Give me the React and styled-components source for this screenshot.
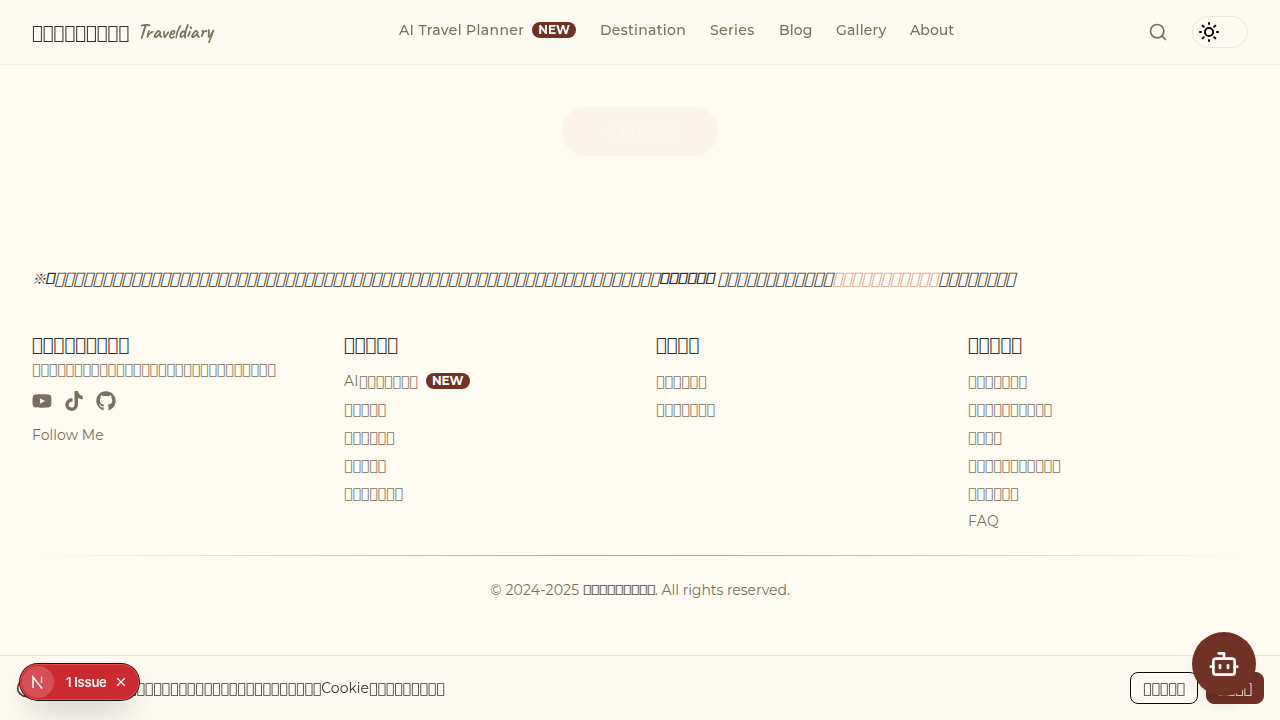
import React from "react";
import styled, { createGlobalStyle } from "styled-components";
import { Search, Bot, Cookie, X } from "lucide-react";
import { FaYoutube, FaTiktok, FaGithub } from "react-icons/fa6";

const Global = createGlobalStyle`
  * { box-sizing: border-box; }
  html { background: #fefbf2; }
  body { margin: 0; overflow: hidden; font: 14px/20px Montserrat, Inter, "Liberation Sans", sans-serif; color: #79705c; }
  ul { list-style: none; margin: 0; padding: 0; }
  h3, p { margin: 0; }
`;

const Page = styled.div`
  height: 720px;
  overflow: hidden;
  position: relative;
`;

const Header = styled.header`
  height: 65px;
  padding: 0 32px;
  display: flex;
  justify-content: space-between;
  background: #fdfaf2;
  border-bottom: 1px solid #f5f1e7;
  will-change: transform;
`;

const Brand = styled.div`
  width: 367px;
  display: flex;
  align-items: center;
  gap: 8px;
  color: #333;
`;

const BrandName = styled.span`
  padding-top: 3px;
`;

const Script = styled.span`
  font: 700 20px/28px Caveat, Lato, cursive;
  color: #79705c;
`;

const Nav = styled.nav`
  flex: 1;
  display: flex;
  gap: 24px;
  padding-top: 20px;
  font-weight: 500;
`;

const NavItem = styled.span`
  display: flex;
  gap: 8px;
  align-items: center;
  height: 20px;
  width: ${(p) => p.$w}px;
  white-space: nowrap;
  letter-spacing: ${(p) => p.$ls}px;
`;

const Badge = styled.span`
  width: 44px;
  height: 16px;
  border-radius: 8px;
  background: #703224;
  color: #fff;
  font-weight: 700;
  font-size: 12px;
  line-height: 16px;
  letter-spacing: 0;
  text-align: center;
`;

const Tools = styled.div`
  display: flex;
  align-items: center;
  gap: 24px;
`;

const Toggle = styled.div`
  width: 56px;
  height: 32px;
  border: 1px solid #efe8d9;
  border-radius: 16px;
  padding: 3px 4px;
  color: #0a0a0a;
`;

const Tofu = styled.span`
  font-family: ${(p) => (p.$short ? "Montserrat" : '"DejaVu Sans"')}, sans-serif;
  font-size: ${(p) => p.$size || 14}px;
  font-weight: ${(p) => p.$weight || 400};
  letter-spacing: ${(p) => (p.$short ? "-0.016em" : "0")};
  line-height: 1;
  white-space: nowrap;
`;

const SlantedTofu = styled(Tofu)`
  display: inline-block;
  font-style: normal;
  transform: skewX(-14deg);
  transform-origin: 0 72%;
`;

// Placeholder boxes, drawn by the font's own missing-glyph shape.
const Boxes = ({ n, slanted, ...rest }) => {
  const Kind = slanted ? SlantedTofu : Tofu;
  return <Kind {...rest}>{"\u{10FFFD}".repeat(n)}</Kind>;
};

const More = styled.div`
  height: 171px;
  padding-top: 42px;
  display: flex;
  justify-content: center;
`;

const MoreButton = styled.div`
  width: 156px;
  height: 49px;
  border-radius: 25px;
  background: #fcf4ea;
  color: #faf9ea;
  -webkit-text-stroke: 0.4px #faf9ea;
  display: flex;
  align-items: center;
  justify-content: center;
`;

const Footer = styled.footer`
  padding: 31px 32px 0;
  height: 484px;
`;

const Notice = styled.p`
  font-size: 16px;
  line-height: 24px;
  font-style: italic;
  white-space: nowrap;
  word-spacing: -1px;
  color: #333;
  height: 24px;
`;

const NoteMark = styled.span`
  font-family: "Noto Sans CJK JP", sans-serif;
  font-size: 14px;
  line-height: 1;
  font-weight: 500;
`;

const NoticeLink = styled.span`
  color: #df9f8e;

  ${SlantedTofu} {
    text-decoration: underline;
  }
`;

const Columns = styled.div`
  display: grid;
  grid-template-columns: repeat(4, 280px);
  gap: 32px;
  margin-top: 40px;
  height: 224px;
`;

const Title = styled.h3`
  height: 28px;
  line-height: 28px;
  color: #333;
  font-weight: 400;
`;

const About = styled.p`
  height: 20px;
  line-height: 20px;
`;

const Socials = styled.div`
  display: flex;
  gap: 12px;
  margin-top: 12px;
  height: 20px;
`;

const Follow = styled.p`
  margin-top: 14px;
  letter-spacing: 0.05px;
`;

const Links = styled.ul`
  margin-top: 12px;
  display: grid;
  gap: 8px;
`;

const LinkRow = styled.li`
  height: 20px;
  display: flex;
  align-items: center;
  white-space: nowrap;
`;

const Latin = styled.span`
  letter-spacing: 0.3px;
`;

const LinkBadge = styled(Badge)`
  margin-left: 8px;
`;

const Rule = styled.div`
  height: 1px;
  background: linear-gradient(90deg, transparent, #a6a29a, transparent);
`;

const Copyright = styled.p`
  margin-top: 24px;
  text-align: center;
`;

const Years = styled.span`
  letter-spacing: 0.15px;
`;

const Rights = styled.span`
  letter-spacing: -0.04px;
`;

const CookieBar = styled.div`
  position: absolute;
  inset: 655px 0 0 0;
  border-top: 1px solid #ece7da;
  background: #fdfaf2;
  padding: 0 16px;
  display: flex;
  align-items: center;
  gap: 8px;
  color: #333;
  will-change: transform;
`;

const Message = styled.p`
  flex: 1;
  white-space: nowrap;
`;

const CookieButton = styled.div`
  width: ${(p) => (p.$solid ? 58 : 68)}px;
  height: 32px;
  border-radius: 8px;
  border: 1px solid ${(p) => (p.$solid ? "#703224" : "#0a0a0a")};
  background: ${(p) => (p.$solid ? "#703224" : "transparent")};
  color: ${(p) => (p.$solid ? "#fff" : "#333")};
  display: flex;
  align-items: center;
  justify-content: center;
`;

const BotButton = styled.div`
  position: absolute;
  left: 1192px;
  top: 632px;
  width: 64px;
  height: 64px;
  border-radius: 50%;
  background: #703224;
  color: #fff;
  display: flex;
  align-items: center;
  justify-content: center;
  box-shadow: 0 10px 15px -3px rgba(0, 0, 0, 0.1), 0 4px 6px -4px rgba(0, 0, 0, 0.1);
  will-change: transform;
`;

const Issue = styled.div`
  position: absolute;
  left: 20px;
  top: 664px;
  width: 119px;
  height: 36px;
  border-radius: 18px;
  background: #ca2a30;
  box-shadow: 0 0 0 1px #171717, inset 0 0 0 1px #e5484d, 0 16px 32px -8px rgba(0, 0, 0, 0.24);
  color: #fff;
  display: flex;
  align-items: center;
  padding-left: 2px;
  font: 600 13px/16px Inter, sans-serif;
  will-change: transform;
`;

const Mark = styled.div`
  width: 32px;
  height: 32px;
  border-radius: 50%;
  background: #d55055;
  display: flex;
  align-items: center;
  justify-content: center;
  margin-right: 12px;
`;

const IssueText = styled.span`
  width: 48px;
  white-space: nowrap;
  letter-spacing: -0.25px;
`;

const SunIcon = () => (
  <svg width="24" height="24" viewBox="0 0 24 24" fill="none" stroke="currentColor" strokeWidth="2">
    <circle cx="12" cy="12" r="4.1" />
    <path d="M12 2.2v2.6M12 19.2v2.6M2.2 12h2.6M19.2 12h2.6" />
    <path strokeLinecap="round" d="M5.6 5.6l1.2 1.2M17.2 17.2l1.2 1.2M5.6 18.4l1.2-1.2M17.2 6.8l1.2-1.2" />
  </svg>
);

const columns = [
  { title: 5, links: [7, 5, 6, 5, 7], ai: true },
  { title: 4, links: [6, 7] },
  { title: 5, links: [7, 10, 4, 11, 6], faq: true },
];

export default function App() {
  return (
    <Page>
      <Global />
      <Header>
        <Brand>
          <BrandName><Boxes n={9} $size={18} /></BrandName>
          <Script>Traveldiary</Script>
        </Brand>
        <Nav>
          <NavItem $w={177} $ls={0.35}>AI Travel Planner <Badge>NEW</Badge></NavItem>
          <NavItem $w={86} $ls={0.28}>Destination</NavItem>
          <NavItem $w={45} $ls={0.35}>Series</NavItem>
          <NavItem $w={33} $ls={0.1}>Blog</NavItem>
          <NavItem $w={50} $ls={0.2}>Gallery</NavItem>
          <NavItem $w={44} $ls={0.05}>About</NavItem>
        </Nav>
        <Tools>
          <Search size={20} color="#79705c" />
          <Toggle><SunIcon /></Toggle>
        </Tools>
      </Header>
      <More>
        <MoreButton><Boxes n={8} $size={15.2} /></MoreButton>
      </More>
      <Footer>
        <Notice>
          <NoteMark>※</NoteMark><Boxes n={1} $size={16} $short $weight={600} /><Boxes n={63} $size={16} slanted />
          <Boxes n={6} $size={16} $short $weight={600} /> <Boxes n={12} $size={16} slanted />
          <NoticeLink><Boxes n={11} $size={16} slanted /></NoticeLink>
          <Boxes n={8} $size={16} slanted />
        </Notice>
        <Columns>
          <section>
            <Title><Boxes n={9} $size={18} /></Title>
            <About><Boxes n={29} /></About>
            <Socials>
              <FaYoutube size={20} />
              <FaTiktok size={20} />
              <FaGithub size={20} />
            </Socials>
            <Follow>Follow Me</Follow>
          </section>
          {columns.map((c, i) => (
            <section key={i}>
              <Title><Boxes n={c.title} $size={18} /></Title>
              <Links>
                {c.links.map((n, j) => (
                  <LinkRow key={j}>
                    {c.ai && j === 0 && <Latin>AI</Latin>}
                    <Boxes n={n} />
                    {c.ai && j === 0 && <LinkBadge>NEW</LinkBadge>}
                  </LinkRow>
                ))}
                {c.faq && <LinkRow><Latin>FAQ</Latin></LinkRow>}
              </Links>
            </section>
          ))}
        </Columns>
        <Rule />
        <Copyright>
          <Years>© 2024-2025 </Years>
          <Boxes n={9} $short $weight={500} />
          <Rights>. All rights reserved.</Rights>
        </Copyright>
      </Footer>
      <CookieBar>
        <Cookie size={20} color="#703224" />
        <Message><Boxes n={33} />Cookie<Boxes n={9} /></Message>
        <CookieButton><Boxes n={5} /></CookieButton>
        <CookieButton $solid><Boxes n={4} /></CookieButton>
      </CookieBar>
      <BotButton><Bot size={32} /></BotButton>
      <Issue>
        <Mark>
          <svg width="14" height="14" viewBox="0 0 14 14" fill="none" stroke="#fff" strokeWidth="1.5">
            <path d="M2 13V2L11 13.5" />
            <path d="M10.5 1.5V8" opacity="0.7" />
          </svg>
        </Mark>
        <IssueText>1 Issue</IssueText>
        <X size={14} strokeWidth={2} />
      </Issue>
    </Page>
  );
}
